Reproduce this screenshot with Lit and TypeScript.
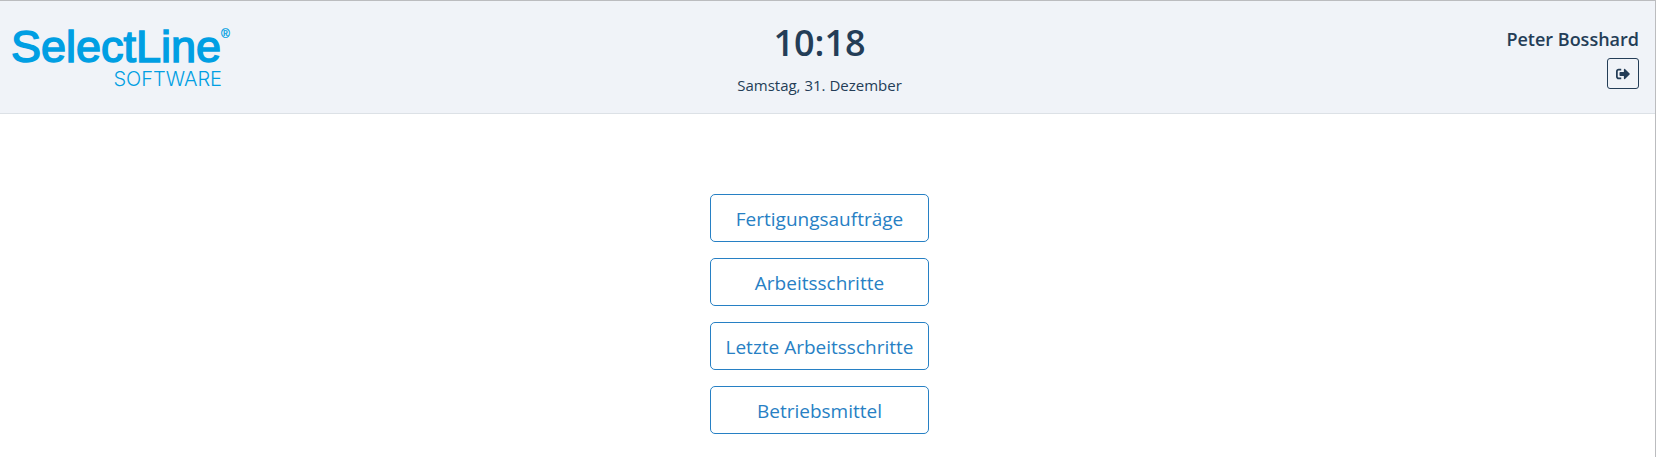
import { LitElement, html, css } from "lit";
import { customElement, property } from "lit/decorators.js";

@customElement("brand-logo")
class BrandLogo extends LitElement {
  static styles = css`
    :host { display: block; }
    .logo { display: block; width: 240px; height: 84px; overflow: visible; fill: #009fe3; }
    .name { font: 45px "Liberation Sans", Arial, sans-serif; stroke: #009fe3; stroke-width: 1.5px; }
    .sub { font: 300 20px Inter, sans-serif; }
    .mark { font: 12px "Liberation Sans", Arial, sans-serif; stroke: #009fe3; stroke-width: 0.3px; }
  `;
  render() {
    return html`
      <svg class="logo" viewBox="0 0 240 84" role="img" aria-label="SelectLine Software">
        <text class="name" x="11" y="45">SelectLine</text>
        <text class="mark" x="221" y="21">®</text>
        <text class="sub" x="222" y="69" text-anchor="end">SOFTWARE</text>
      </svg>
    `;
  }
}

@customElement("app-header")
class AppHeader extends LitElement {
  @property() time = "";
  @property() date = "";
  @property() user = "";

  static styles = css`
    :host { display: block; }
    .header {
      display: grid;
      grid-template-columns: 1fr auto 1fr;
      align-items: start;
      padding: 16px 16px 12px 0;
      background: #f0f3f8;
      border-bottom: 1px solid #dce1e6;
      color: #243d57;
    }
    .clock { text-align: center; }
    .time { margin: 0; padding-top: 2px; font-size: 36px; font-weight: 600; line-height: 48px; }
    .date { margin: 6px 0 0; font-size: 15px; line-height: 24px; }
    .account { display: flex; flex-direction: column; align-items: flex-end; gap: 7px; padding-top: 10px; }
    .user { font-size: 18px; font-weight: 600; line-height: 24px; }
    .logout {
      display: flex;
      align-items: center;
      justify-content: center;
      width: 32px;
      height: 31px;
      padding: 0;
      border: 1px solid #243d57;
      border-radius: 3px;
      background: transparent;
      color: inherit;
    }
    .icon { width: 14px; height: 14px; fill: currentColor; }
  `;

  render() {
    return html`
      <header class="header">
        <brand-logo></brand-logo>
        <div class="clock">
          <h1 class="time">${this.time}</h1>
          <p class="date">${this.date}</p>
        </div>
        <div class="account">
          <span class="user">${this.user}</span>
          <button class="logout" type="button" aria-label="Abmelden">
            <svg class="icon" viewBox="0 0 512 512" aria-hidden="true">
              <path d="M497 273L329 441c-15 15-41 4.500-41-17v-96H152c-13.300 0-24-10.700-24-24v-96c0-13.300 10.700-24 24-24h136V88c0-21.400 25.900-32 41-17l168 168c9.300 9.400 9.300 24.600 0 34zM192 436v-40c0-6.600-5.400-12-12-12H96c-17.700 0-32-14.300-32-32V160c0-17.700 14.300-32 32-32h84c6.600 0 12-5.400 12-12V76c0-6.600-5.400-12-12-12H96c-53 0-96 43-96 96v192c0 53 43 96 96 96h84c6.600 0 12-5.400 12-12z" />
            </svg>
          </button>
        </div>
      </header>
    `;
  }
}

@customElement("app-root")
class AppRoot extends LitElement {
  private entries = ["Fertigungsaufträge", "Arbeitsschritte", "Letzte Arbeitsschritte", "Betriebsmittel"];

  static styles = css`
    :host {
      display: block;
      box-sizing: border-box;
      min-height: 100vh;
      border-top: 1px solid #bbbcbf;
      border-right: 1px solid #bbbcbf;
      background: #fff;
      font-family: "Segoe UI", "Open Sans", sans-serif;
    }
    .main { display: flex; justify-content: center; padding: 80px 16px 0 0; }
    .menu { display: grid; gap: 16px; }
    .entry {
      min-width: 219px;
      padding: 9px 15px 7px;
      border: 1px solid #2780c4;
      border-radius: 5px;
      background: #fff;
      color: #2780c4;
      font: inherit;
      font-size: 19px;
      line-height: 30px;
    }
  `;

  render() {
    return html`
      <app-header time="10:18" date="Samstag, 31. Dezember" user="Peter Bosshard"></app-header>
      <main class="main">
        <nav class="menu">
          ${this.entries.map((label) => html`<button class="entry" type="button">${label}</button>`)}
        </nav>
      </main>
    `;
  }
}
